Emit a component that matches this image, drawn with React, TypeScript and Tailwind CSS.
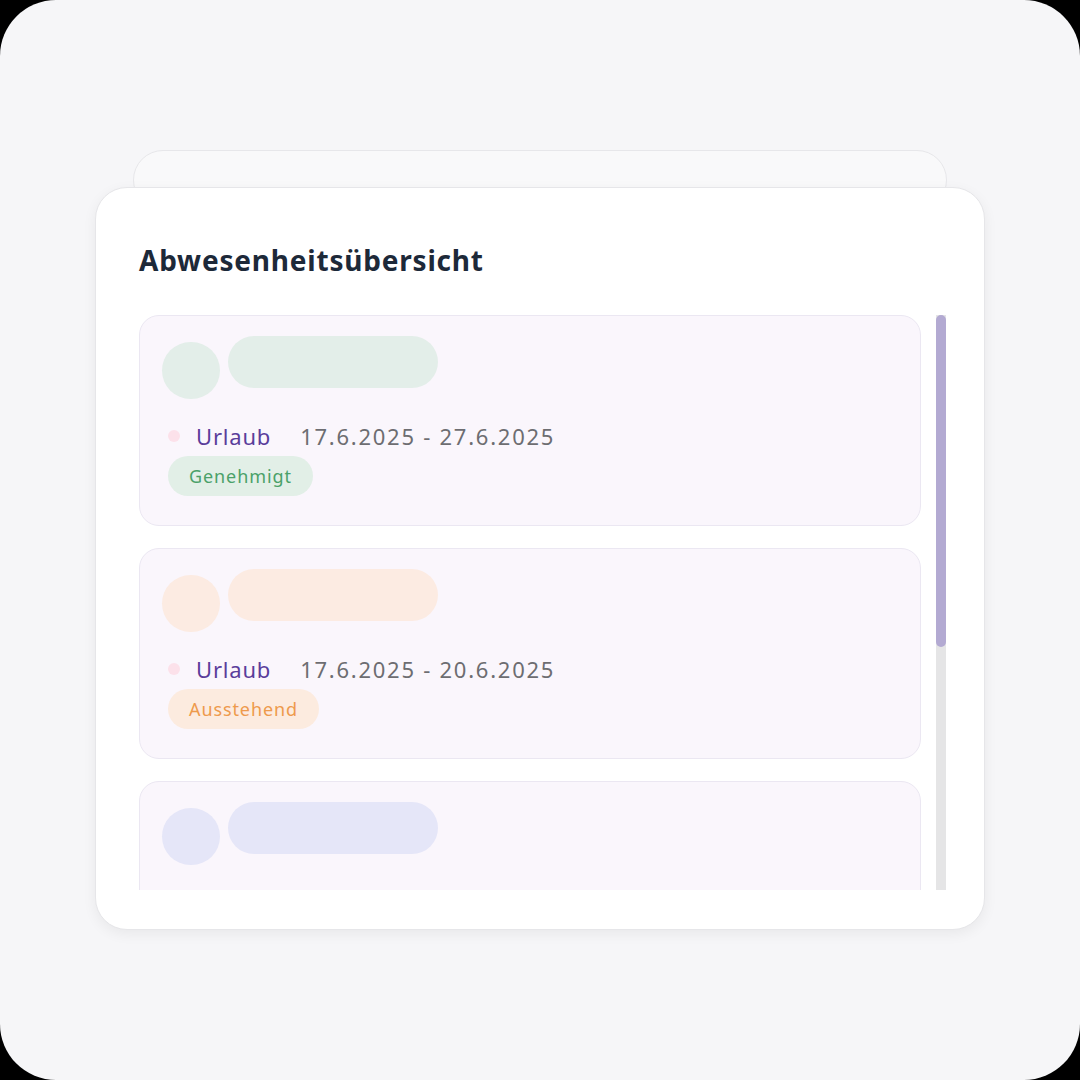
const absences = [
  {
    id: 1,
    range: "17.6.2025 - 27.6.2025",
    status: "Genehmigt",
    tint: "bg-[#e3eee9]",
    badge: "bg-[#e2efe7] text-[#4aa169]",
  },
  {
    id: 2,
    range: "17.6.2025 - 20.6.2025",
    status: "Ausstehend",
    tint: "bg-[#fcebe2]",
    badge: "bg-[#fcebdf] text-[#ee9a4c]",
  },
  {
    id: 3,
    range: "",
    status: "",
    tint: "bg-[#e5e6f8]",
    badge: "",
  },
];

const AbsenceCard = ({ item }: { item: (typeof absences)[number] }) => {
  return (
    <div className="h-[211px] shrink-0 rounded-[20px] border-[1.5px] border-[#ebe7f2] bg-[#faf6fc] pl-[22px] pt-[20px]">
      <div className="flex items-start gap-[8px]">
        <div className={`mt-[6px] h-[57px] w-[58px] rounded-full ${item.tint}`} />
        <div className={`h-[52px] w-[210px] rounded-full ${item.tint}`} />
      </div>
      {item.range && (
        <>
          <div className="mt-[22px] flex items-center pl-[6px]">
            <span className="h-[12px] w-[12px] rounded-full bg-[#fce1ea]" />
            <span className="ml-[16px] text-[22px] leading-[30px] tracking-[0.8px] text-[#5a3d9b]">
              Urlaub
            </span>
            <span className="ml-[29px] text-[22px] leading-[30px] tracking-[1.75px] text-[#6d6d71]">
              {item.range}
            </span>
          </div>
          <div className="mt-[5px] pl-[6px]">
            <span
              className={`inline-flex h-[40px] items-center rounded-full px-[21px] text-[18px] tracking-[0.9px] ${item.badge}`}
            >
              {item.status}
            </span>
          </div>
        </>
      )}
    </div>
  );
};

const App = () => {
  return (
    <div
      className="h-[1080px] w-[1080px] bg-black"
      style={{ fontFamily: "'Noto Sans', 'Open Sans', sans-serif" }}
    >
      <div className="flex h-full w-full flex-col items-center rounded-[56px] bg-[#f6f6f8] pt-[150px]">
        <div className="h-[60px] w-[814px] rounded-[32px] border-[1.5px] border-[#e7e7ea] bg-[#f9f9fa]" />
        <div className="-mt-[23px] flex h-[743px] w-[890px] flex-col rounded-[32px] border-[1.5px] border-[#e6e6e9] bg-white pb-[39px] pl-[43px] pr-[38px] pt-[54px] shadow-[0_4px_14px_rgba(0,0,0,0.06)]">
          <h1 className="text-[28px] font-bold leading-[36px] tracking-[0.8px] text-[#1d2939]">
            Abwesenheitsübersicht
          </h1>
          <div className="mt-[37px] flex min-h-0 flex-1 gap-[15px]">
            <div className="flex min-h-0 flex-1 flex-col gap-[22px] overflow-hidden">
              {absences.map((item) => (
                <AbsenceCard key={item.id} item={item} />
              ))}
            </div>
            <div className="flex w-[10px] flex-col bg-[#e5e5e6]">
              <div className="h-[332px] rounded-full bg-[#b3aad2]" />
            </div>
          </div>
        </div>
      </div>
    </div>
  );
};

export default App;
